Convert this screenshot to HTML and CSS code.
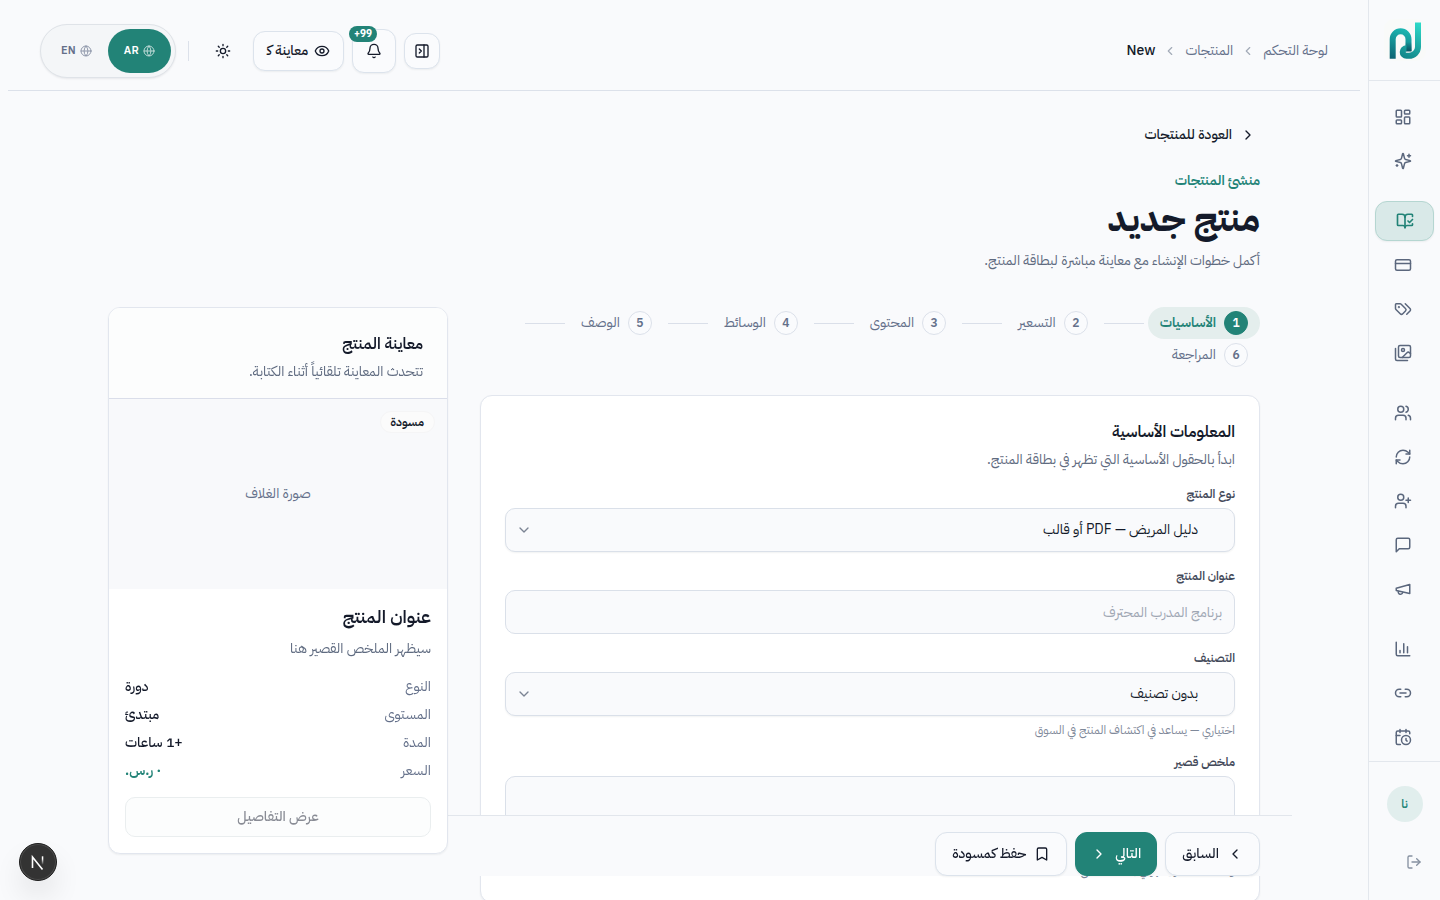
FILE: index.html
```html
<!DOCTYPE html>
<html lang="ar" dir="rtl">
<head>
    <meta charset="UTF-8">
    <meta name="viewport" content="width=device-width, initial-scale=1.0">
    <title>منتج جديد</title>
    <link rel="stylesheet" href="styles.css">
</head>
<body>
    <div class="app">
        <!-- Sidebar -->
        <aside class="sidebar">
            <div class="sidebar-logo">
                <svg width="44" height="44" viewBox="0 0 44 44" fill="none">
                    <defs>
                        <linearGradient id="logoLeft" gradientUnits="userSpaceOnUse" x1="20" y1="10" x2="10" y2="41">
                            <stop offset="0" stop-color="#1cb9b4"/>
                            <stop offset="1" stop-color="#0d6372"/>
                        </linearGradient>
                        <linearGradient id="logoRight" gradientUnits="userSpaceOnUse" x1="36" y1="4" x2="20" y2="40">
                            <stop offset="0" stop-color="#2fdccb"/>
                            <stop offset="1" stop-color="#118488"/>
                        </linearGradient>
                        <linearGradient id="logoFold" gradientUnits="userSpaceOnUse" x1="0" y1="24" x2="0" y2="33">
                            <stop offset="0" stop-color="#0b5665" stop-opacity="0"/>
                            <stop offset="1" stop-color="#0b5665"/>
                        </linearGradient>
                    </defs>
                    <rect x="1" y="1" width="42" height="42" rx="10" fill="#f9faf9"/>
                    <path d="M9.700 40.700V21.200a7.900 7.900 0 0 1 15.800 0V33" stroke="url(#logoLeft)" stroke-width="6"/>
                    <path d="M22.500 23h6v10.500h-6z" fill="url(#logoFold)"/>
                    <path d="M23.500 30.200a3.800 3.800 0 0 0 0 7.600H26A9 9 0 0 0 35 29V4.500" stroke="url(#logoRight)" stroke-width="6"/>
                </svg>
            </div>
            <nav class="sidebar-nav">
                <div class="nav-group">
                    <a class="nav-item"><svg class="icon" viewBox="0 0 24 24"><rect width="7" height="9" x="3" y="3" rx="1"/><rect width="7" height="5" x="14" y="3" rx="1"/><rect width="7" height="9" x="14" y="12" rx="1"/><rect width="7" height="5" x="3" y="16" rx="1"/></svg></a>
                    <a class="nav-item"><svg class="icon" viewBox="0 0 24 24"><path d="M9.937 15.500A2 2 0 0 0 8.500 14.063l-6.135-1.582a.5.5 0 0 1 0-.962L8.500 9.936A2 2 0 0 0 9.937 8.500l1.582-6.135a.5.5 0 0 1 .963 0L14.063 8.500A2 2 0 0 0 15.500 9.937l6.135 1.581a.5.5 0 0 1 0 .964L15.500 14.063a2 2 0 0 0-1.437 1.437l-1.582 6.135a.5.5 0 0 1-.963 0z"/><path d="M20 3v4M22 5h-4M4 17v2M5 18H3"/></svg></a>
                </div>
                <div class="nav-group">
                    <a class="nav-item active"><svg class="icon" viewBox="0 0 24 24"><path d="M12 21V7"/><path d="m16 12 2 2 4-4"/><path d="M22 6V4a1 1 0 0 0-1-1h-5a4 4 0 0 0-4 4 4 4 0 0 0-4-4H3a1 1 0 0 0-1 1v13a1 1 0 0 0 1 1h6a3 3 0 0 1 3 3 3 3 0 0 1 3-3h6a1 1 0 0 0 1-1v-1.300"/></svg></a>
                    <a class="nav-item"><svg class="icon" viewBox="0 0 24 24"><rect width="20" height="14" x="2" y="5" rx="2"/><path d="M2 10h20"/></svg></a>
                    <a class="nav-item"><svg class="icon" viewBox="0 0 24 24"><path d="m15 5 6.300 6.300a2.400 2.400 0 0 1 0 3.400L17 19"/><path d="M9.586 5.586A2 2 0 0 0 8.172 5H3a1 1 0 0 0-1 1v5.172a2 2 0 0 0 .586 1.414L8.290 18.290a2.426 2.426 0 0 0 3.420 0l3.580-3.580a2.426 2.426 0 0 0 0-3.420z"/><circle cx="6.500" cy="9.500" r=".5" fill="currentColor"/></svg></a>
                    <a class="nav-item"><svg class="icon" viewBox="0 0 24 24"><path d="M18 22H4a2 2 0 0 1-2-2V6"/><path d="m22 13-1.296-1.296a2.410 2.410 0 0 0-3.408 0L11 18"/><circle cx="12" cy="8" r="2"/><rect width="16" height="16" x="6" y="2" rx="2"/></svg></a>
                </div>
                <div class="nav-group">
                    <a class="nav-item"><svg class="icon" viewBox="0 0 24 24"><path d="M16 21v-2a4 4 0 0 0-4-4H6a4 4 0 0 0-4 4v2"/><circle cx="9" cy="7" r="4"/><path d="M22 21v-2a4 4 0 0 0-3-3.870"/><path d="M16 3.130a4 4 0 0 1 0 7.750"/></svg></a>
                    <a class="nav-item"><svg class="icon" viewBox="0 0 24 24"><path d="M3 12a9 9 0 0 1 9-9 9.750 9.750 0 0 1 6.740 2.740L21 8"/><path d="M21 3v5h-5"/><path d="M21 12a9 9 0 0 1-9 9 9.750 9.750 0 0 1-6.740-2.740L3 16"/><path d="M8 16H3v5"/></svg></a>
                    <a class="nav-item"><svg class="icon" viewBox="0 0 24 24"><path d="M16 21v-2a4 4 0 0 0-4-4H6a4 4 0 0 0-4 4v2"/><circle cx="9" cy="7" r="4"/><path d="M19 8v6M22 11h-6"/></svg></a>
                    <a class="nav-item"><svg class="icon" viewBox="0 0 24 24"><path d="M21 15a2 2 0 0 1-2 2H7l-4 4V5a2 2 0 0 1 2-2h14a2 2 0 0 1 2 2z"/></svg></a>
                    <a class="nav-item"><svg class="icon" viewBox="0 0 24 24"><path d="m3 11 18-5v12L3 14v-3z"/><path d="M11.600 16.800a3 3 0 1 1-5.800-1.600"/></svg></a>
                </div>
                <div class="nav-group">
                    <a class="nav-item"><svg class="icon" viewBox="0 0 24 24"><path d="M3 3v16a2 2 0 0 0 2 2h16"/><path d="M18 17V9M13 17V5M8 17v-3"/></svg></a>
                    <a class="nav-item"><svg class="icon" viewBox="0 0 24 24"><path d="M9 17H7A5 5 0 0 1 7 7h2"/><path d="M15 7h2a5 5 0 1 1 0 10h-2"/><path d="M8 12h8"/></svg></a>
                    <a class="nav-item"><svg class="icon" viewBox="0 0 24 24"><path d="M21 7.500V6a2 2 0 0 0-2-2H5a2 2 0 0 0-2 2v14a2 2 0 0 0 2 2h3.500"/><path d="M16 2v4M8 2v4M3 10h5"/><path d="M17.500 17.500 16 16.300V14"/><circle cx="16" cy="16" r="6"/></svg></a>
                </div>
            </nav>
            <div class="sidebar-footer">
                <div class="avatar">نا</div>
                <a class="logout"><svg class="icon" viewBox="0 0 24 24"><path d="M9 21H5a2 2 0 0 1-2-2V5a2 2 0 0 1 2-2h4"/><path d="m16 17 5-5-5-5"/><path d="M21 12H9"/></svg></a>
            </div>
        </aside>

        <div class="main">
            <!-- Top bar -->
            <header class="topbar">
                <div class="breadcrumb">
                    <span>لوحة التحكم</span>
                    <svg class="icon" viewBox="0 0 24 24"><path d="m15 18-6-6 6-6"/></svg>
                    <span>المنتجات</span>
                    <svg class="icon" viewBox="0 0 24 24"><path d="m15 18-6-6 6-6"/></svg>
                    <span class="current">New</span>
                </div>
                <div class="actions">
                    <button class="icon-btn"><svg class="icon" viewBox="0 0 24 24"><rect width="18" height="18" x="3" y="3" rx="2"/><path d="M15 3v18"/><path d="m8 9 3 3-3 3"/></svg></button>
                    <button class="icon-btn bell">
                        <svg class="icon" viewBox="0 0 24 24"><path d="M10.268 21a2 2 0 0 0 3.464 0"/><path d="M3.262 15.326A1 1 0 0 0 4 17h16a1 1 0 0 0 .740-1.673C19.410 13.956 18 12.499 18 8A6 6 0 0 0 6 8c0 4.499-1.411 5.956-2.738 7.326"/></svg>
                        <span class="count" dir="ltr">+99</span>
                    </button>
                    <button class="preview-btn">
                        <svg class="icon" viewBox="0 0 24 24"><path d="M2.062 12.348a1 1 0 0 1 0-.696 10.750 10.750 0 0 1 19.876 0 1 1 0 0 1 0 .696 10.750 10.750 0 0 1-19.876 0"/><circle cx="12" cy="12" r="3"/></svg>
                        <span>معاينة ك&zwj;</span>
                    </button>
                    <button class="theme-btn"><svg class="icon" viewBox="0 0 24 24"><circle cx="12" cy="12" r="4"/><path d="M12 2v2M12 20v2M4.930 4.930l1.410 1.410M17.660 17.660l1.410 1.410M2 12h2M20 12h2M6.340 17.660l-1.410 1.410M19.070 4.930l-1.410 1.410"/></svg></button>
                    <span class="divider"></span>
                    <div class="lang-switch">
                        <button class="lang active">
                            <svg class="icon" viewBox="0 0 24 24"><circle cx="12" cy="12" r="10"/><path d="M12 2a14.500 14.500 0 0 0 0 20 14.500 14.500 0 0 0 0-20"/><path d="M2 12h20"/></svg>
                            <span>AR</span>
                        </button>
                        <button class="lang">
                            <svg class="icon" viewBox="0 0 24 24"><circle cx="12" cy="12" r="10"/><path d="M12 2a14.500 14.500 0 0 0 0 20 14.500 14.500 0 0 0 0-20"/><path d="M2 12h20"/></svg>
                            <span>EN</span>
                        </button>
                    </div>
                </div>
            </header>

            <main class="content">
                <a class="back">
                    <svg class="icon" viewBox="0 0 24 24"><path d="m9 18 6-6-6-6"/></svg>
                    <span>العودة للمنتجات</span>
                </a>
                <p class="eyebrow">منشئ المنتجات</p>
                <h1>منتج جديد</h1>
                <p class="subtitle">أكمل خطوات الإنشاء مع معاينة مباشرة لبطاقة المنتج.</p>

                <div class="builder">
                    <section class="builder-main">
                        <!-- Steps -->
                        <ol class="steps">
                            <li><span class="step active"><b>1</b>الأساسيات</span><i></i></li>
                            <li><span class="step"><b>2</b>التسعير</span><i></i></li>
                            <li><span class="step"><b>3</b>المحتوى</span><i></i></li>
                            <li><span class="step"><b>4</b>الوسائط</span><i></i></li>
                            <li><span class="step"><b>5</b>الوصف</span><i></i></li>
                            <li><span class="step"><b>6</b>المراجعة</span></li>
                        </ol>

                        <!-- Basics form -->
                        <div class="card form-card">
                            <h2>المعلومات الأساسية</h2>
                            <p class="card-desc">ابدأ بالحقول الأساسية التي تظهر في بطاقة المنتج.</p>
                            <div class="field">
                                <label>نوع المنتج</label>
                                <div class="control select">
                                    <span>دليل المريض — PDF أو قالب</span>
                                    <svg class="icon" viewBox="0 0 24 24"><path d="m6 9 6 6 6-6"/></svg>
                                </div>
                            </div>
                            <div class="field">
                                <label for="title">عنوان المنتج</label>
                                <input id="title" class="control" type="text" placeholder="برنامج المدرب المحترف">
                            </div>
                            <div class="field">
                                <label>التصنيف</label>
                                <div class="control select">
                                    <span>بدون تصنيف</span>
                                    <svg class="icon" viewBox="0 0 24 24"><path d="m6 9 6 6 6-6"/></svg>
                                </div>
                                <p class="hint">اختياري — يساعد في اكتشاف المنتج في السوق</p>
                            </div>
                            <div class="field">
                                <label for="summary">ملخص قصير</label>
                                <textarea id="summary" class="control"></textarea>
                                <p class="hint">وصف مختصر يظهر في بطاقة المنتج.</p>
                            </div>
                        </div>

                        <!-- Sticky actions -->
                        <div class="action-bar">
                            <button class="btn">
                                <svg class="icon" viewBox="0 0 24 24"><path d="m15 18-6-6 6-6"/></svg>
                                <span>السابق</span>
                            </button>
                            <button class="btn primary">
                                <span>التالي</span>
                                <svg class="icon" viewBox="0 0 24 24"><path d="m9 18 6-6-6-6"/></svg>
                            </button>
                            <button class="btn">
                                <svg class="icon" viewBox="0 0 24 24"><path d="m19 21-7-4-7 4V5a2 2 0 0 1 2-2h10a2 2 0 0 1 2 2z"/></svg>
                                <span>حفظ كمسودة</span>
                            </button>
                        </div>
                    </section>

                    <!-- Live preview -->
                    <aside class="card preview">
                        <div class="preview-head">
                            <h2>معاينة المنتج</h2>
                            <p class="card-desc">تتحدث المعاينة تلقائياً أثناء الكتابة.</p>
                        </div>
                        <div class="cover">
                            <span class="badge">مسودة</span>
                            صورة الغلاف
                        </div>
                        <div class="preview-body">
                            <h3>عنوان المنتج</h3>
                            <p class="preview-text">سيظهر الملخص القصير هنا</p>
                            <dl>
                                <div class="row"><dt>النوع</dt><dd>دورة</dd></div>
                                <div class="row"><dt>المستوى</dt><dd>مبتدئ</dd></div>
                                <div class="row"><dt>المدة</dt><dd>+1 ساعات</dd></div>
                                <div class="row"><dt>السعر</dt><dd class="price">٠ ر.س.</dd></div>
                            </dl>
                            <button class="details-btn" disabled>عرض التفاصيل</button>
                        </div>
                    </aside>
                </div>
            </main>
        </div>

        <!-- Dev tools button -->
        <div class="dev-badge">
            <svg width="38" height="38" viewBox="0 0 38 38" fill="none">
                <defs>
                    <linearGradient id="fadeLeg" x1="0" y1="0" x2="0" y2="1">
                        <stop offset="0.3" stop-color="#fff"/>
                        <stop offset="1" stop-color="#fff" stop-opacity="0"/>
                    </linearGradient>
                </defs>
                <path d="M13.500 25V14L23.500 26.500" stroke="#fff" stroke-width="1.600"/>
                <rect x="22.800" y="13.300" width="1.500" height="8.500" fill="url(#fadeLeg)"/>
            </svg>
        </div>
    </div>
</body>
</html>
```
FILE: styles.css
```css
* {
    box-sizing: border-box;
}

body {
    margin: 0;
    background: #f9fafc;
    color: #141a2a;
    font-family: 'IBM Plex Sans Arabic', 'Noto Sans', 'DejaVu Sans', sans-serif;
    font-size: 14px;
    line-height: 20px;
}

h1, h2, h3, p, ol, dl, dd {
    margin: 0;
    padding: 0;
}

button, input, textarea {
    font: inherit;
    color: inherit;
}

button {
    display: flex;
    align-items: center;
    justify-content: center;
    padding: 0;
    border: none;
    background: none;
}

.icon {
    width: 16px;
    height: 16px;
    flex: none;
    fill: none;
    stroke: currentColor;
    stroke-width: 2;
    stroke-linecap: round;
    stroke-linejoin: round;
}

.app {
    display: flex;
    height: 900px;
    overflow: hidden;
}

/* Sidebar */
.sidebar {
    display: flex;
    flex-direction: column;
    flex: none;
    width: 72px;
    border-left: 1px solid #e3e7ed;
}

.sidebar-logo {
    display: flex;
    align-items: center;
    justify-content: center;
    height: 81px;
    border-bottom: 1px solid #e3e7ed;
}

.sidebar-nav {
    display: flex;
    flex-direction: column;
    gap: 20px;
    height: 680px;
    padding: 16px 6px 0;
    overflow: hidden;
}

.nav-group {
    display: flex;
    flex-direction: column;
    gap: 4px;
}

.nav-item {
    display: flex;
    align-items: center;
    justify-content: center;
    height: 40px;
    border: 1px solid transparent;
    border-radius: 12px;
    color: #5b677d;
}

.nav-item .icon {
    width: 18px;
    height: 18px;
    margin-right: 3px;
    stroke-width: 2;
}

.nav-item.active {
    border-color: #b5d6d1;
    background: #d9e9e8;
    color: #228377;
    box-shadow: 0 1px 2px rgba(20, 26, 42, 0.06);
}

.nav-item.active .icon {
    margin-right: 0;
    stroke-width: 2.2;
}

.sidebar-footer {
    display: flex;
    flex-direction: column;
    align-items: center;
    gap: 32px;
    flex: 1;
    padding-top: 24px;
    border-top: 1px solid #e3e7ed;
}

.avatar {
    display: flex;
    align-items: center;
    justify-content: center;
    width: 36px;
    height: 36px;
    border-radius: 50%;
    background: #e1eeed;
    color: #228377;
    font-size: 12px;
    font-weight: 600;
}

.logout {
    display: flex;
    margin-right: -18px;
    color: #8791a1;
}

/* Top bar */
.main {
    flex: 1;
    min-width: 0;
}

.topbar {
    display: flex;
    align-items: flex-start;
    justify-content: space-between;
    height: 91px;
    margin: 0 8px;
    padding: 24px 32px 0;
    border-bottom: 1px solid #dce1ea;
}

.breadcrumb {
    display: flex;
    align-items: center;
    height: 54px;
    gap: 8px;
    color: #64708a;
}

.breadcrumb .icon {
    width: 14px;
    height: 14px;
    color: #a3abb8;
}

.breadcrumb .current {
    color: #141a2a;
    font-weight: 500;
}

.actions {
    display: flex;
    align-items: center;
    gap: 8px;
    height: 54px;
}

.icon-btn,
.preview-btn,
.btn {
    border: 1px solid #dce3ec;
    border-radius: 12px;
    background: #fafbfd;
    box-shadow: 0 1px 2px rgba(20, 26, 42, 0.06);
}

.icon-btn {
    position: relative;
    width: 36px;
    height: 36px;
}

.icon-btn.bell {
    width: 44px;
    height: 44px;
}

.count {
    position: absolute;
    top: -4px;
    left: -4px;
    padding: 0 5px;
    border-radius: 8px;
    background: #228377;
    color: #fff;
    font-size: 10px;
    font-weight: 700;
    line-height: 16px;
}

.preview-btn {
    width: 91px;
    height: 40px;
    gap: 6px;
    font-weight: 500;
}

.theme-btn {
    width: 36px;
    height: 36px;
    margin-right: 4px;
}

.divider {
    width: 1px;
    height: 20px;
    margin-left: 4px;
    margin-right: 8px;
    background: #dce1ea;
}

.lang-switch {
    display: flex;
    width: 136px;
    height: 54px;
    padding: 4px;
    border: 1px solid #dfe3e8;
    border-radius: 27px;
    background: #f4f6f8;
    box-shadow: 0 1px 2px rgba(20, 26, 42, 0.08);
}

.lang {
    width: 63px;
    height: 44px;
    gap: 4px;
    border-radius: 22px;
    color: #64708a;
    font-size: 11px;
    font-weight: 600;
    letter-spacing: 0.3px;
}

.lang .icon {
    width: 12px;
    height: 12px;
    opacity: 0.7;
}

.lang.active {
    background: #228377;
    color: #fff;
}

/* Page content */
.content {
    width: 1152px;
    margin-right: 108px;
    padding-top: 34px;
}

.back {
    display: flex;
    align-items: center;
    gap: 8px;
    padding-right: 4px;
    font-weight: 500;
}

.eyebrow {
    margin-top: 26px;
    color: #228377;
    font-weight: 600;
}

h1 {
    margin-top: 8px;
    font-size: 36px;
    font-weight: 700;
    line-height: 40px;
}

.subtitle {
    margin-top: 12px;
    color: #5f6b80;
}

.builder {
    display: flex;
    align-items: flex-start;
    gap: 32px;
    margin-top: 36px;
}

.builder-main {
    width: 780px;
}

/* Steps */
.steps {
    display: flex;
    flex-wrap: wrap;
    column-gap: 4px;
    list-style: none;
}

.steps li {
    display: flex;
    align-items: center;
    gap: 4px;
}

.steps i {
    width: 40px;
    height: 1px;
    background: #dadfe9;
}

.step {
    display: flex;
    align-items: center;
    gap: 8px;
    height: 32px;
    padding: 0 12px;
    border-radius: 16px;
    color: #64708a;
}

.step b {
    display: flex;
    align-items: center;
    justify-content: center;
    width: 24px;
    height: 24px;
    border: 1px solid #dce1ea;
    border-radius: 50%;
    background: #fafbfd;
    font-size: 12px;
    font-weight: 600;
}

.step.active {
    background: #e4eeed;
    color: #228377;
    font-weight: 600;
}

.step.active b {
    border-color: #228377;
    background: #228377;
    color: #fff;
}

/* Cards */
.card {
    border: 1px solid #e2e6ee;
    border-radius: 12px;
    background: #fff;
    box-shadow: 0 1px 2px rgba(20, 26, 42, 0.06);
}

.card h2 {
    font-size: 16px;
    font-weight: 600;
    line-height: 24px;
}

.card-desc {
    margin-top: 6px;
    color: #5f6b80;
}

.form-card {
    display: flex;
    flex-direction: column;
    margin-top: 24px;
    padding: 24px;
}

.field {
    display: flex;
    flex-direction: column;
    gap: 6px;
    margin-top: 16px;
}

.field label {
    color: #434959;
    font-size: 12px;
    font-weight: 600;
    line-height: 16px;
}

.control {
    display: block;
    width: 100%;
    height: 44px;
    padding: 0 12px;
    border: 1px solid #dae0e9;
    border-radius: 10px;
    background: #f9fafc;
}

.control::placeholder {
    color: #a0a7b4;
}

.control.select {
    display: flex;
    align-items: center;
    justify-content: space-between;
    padding: 0 36px 0 10px;
    box-shadow: 0 1px 2px rgba(20, 26, 42, 0.06);
}

.select .icon {
    color: #7b8494;
}

textarea.control {
    height: 80px;
    resize: none;
}

.hint {
    color: #7f899a;
    font-size: 12px;
    line-height: 16px;
}

/* Bottom actions */
.action-bar {
    position: sticky;
    bottom: 24px;
    display: flex;
    gap: 8px;
    margin: 24px -32px 0;
    padding: 16px 32px 0;
    border-top: 1px solid #e2e6ec;
    background: #f9fafc;
}

.btn {
    gap: 8px;
    height: 44px;
    padding: 0 16px;
    font-weight: 500;
}

.btn.primary {
    padding: 0 15px;
    border-color: #228377;
    background: #228377;
    color: #fff;
}

/* Product preview */
.preview {
    position: relative;
    flex: none;
    width: 340px;
    overflow: hidden;
}

.preview-head {
    padding: 24px 24px 16px;
    border-bottom: 1px solid #dadeea;
    background: #fcfdfd;
}

.cover {
    position: relative;
    display: flex;
    align-items: center;
    justify-content: center;
    height: 190px;
    background: #f8f9fb;
    color: #64708a;
}

.badge {
    position: absolute;
    top: 12px;
    right: 12px;
    padding: 0 10px;
    border: 1px solid #f5f5f6;
    border-radius: 11px;
    background: #fbfbfb;
    color: #141a2a;
    font-size: 12px;
    font-weight: 600;
    line-height: 20px;
}

.preview-body {
    padding: 16px;
}

.preview-body h3 {
    font-size: 18px;
    font-weight: 600;
    line-height: 23px;
}

.preview-text {
    margin-top: 11px;
    color: #5f6b80;
}

.preview-body dl {
    display: flex;
    flex-direction: column;
    gap: 8px;
    margin-top: 18px;
}

.row {
    display: flex;
    justify-content: space-between;
}

.row dt {
    color: #64708a;
}

.row dd {
    font-weight: 500;
}

.row .price {
    color: #228377;
    font-weight: 600;
}

.details-btn {
    width: 100%;
    height: 40px;
    margin-top: 16px;
    border: 1px solid #eaeeef;
    border-radius: 10px;
    background: #fcfdfd;
    color: #898c95;
    font-weight: 500;
}

/* Dev tools button */
.dev-badge {
    position: fixed;
    bottom: 19px;
    left: 19px;
    width: 38px;
    height: 38px;
    border: 1px solid #1d1d1d;
    border-radius: 50%;
    background: #333;
    box-shadow: inset 0 0 0 1px #4c4c4c, 0 16px 32px -8px rgba(0, 0, 0, 0.24);
}

.dev-badge svg {
    display: block;
    margin: -1px;
}
```
